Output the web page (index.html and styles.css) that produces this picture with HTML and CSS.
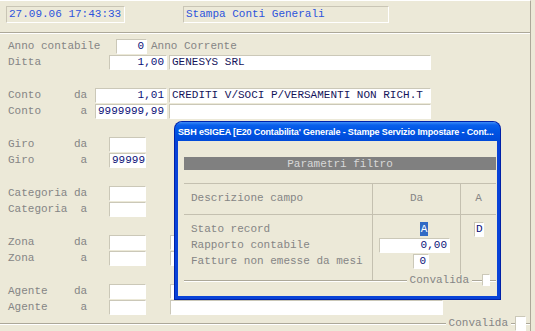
FILE: index.html
```html
<!DOCTYPE html>
<html lang="it">
<head>
  <meta charset="UTF-8" />
  <title>Stampa Conti Generali</title>
  <link rel="stylesheet" href="styles.css">
</head>
<body>
  <div class="screen">
    <header class="head">
      <div class="clock">27.09.06 17:43:33</div>
      <div class="title">Stampa Conti Generali</div>
    </header>

    <main class="form">
      <div class="row">
        <span class="lbl">Anno contabile</span>
        <span class="fld num w-anno">0</span>
        <span class="note">Anno Corrente</span>
      </div>
      <div class="row">
        <span class="lbl">Ditta</span>
        <span class="fld num w-ditta">1,00</span>
        <span class="fld w-name">GENESYS SRL</span>
      </div>
      <div class="gap"></div>
      <div class="row">
        <span class="lbl">Conto     da</span>
        <span class="fld num w-conto">1,01</span>
        <span class="fld w-name">CREDITI V/SOCI P/VERSAMENTI NON RICH.T</span>
      </div>
      <div class="row">
        <span class="lbl">Conto      a</span>
        <span class="fld num w-conto">9999999,99</span>
        <span class="fld w-name"></span>
      </div>
      <div class="gap"></div>
      <div class="row">
        <span class="lbl">Giro      da</span>
        <span class="fld w-short"></span>
      </div>
      <div class="row">
        <span class="lbl">Giro       a</span>
        <span class="fld w-short">99999</span>
      </div>
      <div class="gap"></div>
      <div class="row">
        <span class="lbl">Categoria da</span>
        <span class="fld w-short"></span>
      </div>
      <div class="row">
        <span class="lbl">Categoria  a</span>
        <span class="fld w-short"></span>
      </div>
      <div class="gap"></div>
      <div class="row">
        <span class="lbl">Zona      da</span>
        <span class="fld w-short"></span>
        <span class="fld w-desc"></span>
      </div>
      <div class="row">
        <span class="lbl">Zona       a</span>
        <span class="fld w-short"></span>
        <span class="fld w-desc"></span>
      </div>
      <div class="gap"></div>
      <div class="row">
        <span class="lbl">Agente    da</span>
        <span class="fld w-short"></span>
        <span class="fld w-desc"></span>
      </div>
      <div class="row">
        <span class="lbl">Agente     a</span>
        <span class="fld w-short"></span>
        <span class="fld w-desc"></span>
      </div>
    </main>

    <footer class="foot">
      <div class="rule"></div>
      <span class="ok-label">Convalida</span>
      <div class="rule short"></div>
      <span class="ok-box"></span>
      <div class="rule end"></div>
    </footer>
  </div>

  <!-- finestra parametri filtro -->
  <div class="dialog">
    <div class="dlg-bar">SBH eSIGEA [E20 Contabilita' Generale - Stampe Servizio Impostare - Cont...</div>
    <div class="dlg-body">
      <div class="band">Parametri filtro</div>
      <div class="table">
        <div class="trow thead">
          <div class="c1">Descrizione campo</div>
          <div class="c2 center">Da</div>
          <div class="c3 center">A</div>
        </div>
        <div class="trow tbody">
          <div class="c1">
            <div class="line">Stato record</div>
            <div class="line">Rapporto contabile</div>
            <div class="line">Fatture non emesse da mesi</div>
          </div>
          <div class="c2">
            <div class="line"><span class="sel">A</span></div>
            <div class="line"><span class="fld num w-rapp">0,00</span></div>
            <div class="line"><span class="fld num w-mesi">0</span></div>
          </div>
          <div class="c3">
            <div class="line"><span class="fld w-d">D</span></div>
            <div class="line"></div>
            <div class="line"></div>
          </div>
        </div>
        <div class="dlg-foot">
          <div class="rule"></div>
          <span class="ok-label">Convalida</span>
          <div class="rule tiny"></div>
          <span class="ok-box small"></span>
          <div class="rule tail"></div>
        </div>
      </div>
    </div>
  </div>
</body>
</html>
```

FILE: styles.css
```css
body {
  margin: 0;
  width: 535px;
  height: 331px;
  overflow: hidden;
  position: relative;
  background: #ece9d8;
  color: #858585;
  font-family: "Liberation Mono", "Courier New", monospace;
  font-size: 11px;
  line-height: 13px;
}
.screen {
  width: 531px;
  height: 331px;
  box-sizing: border-box;
  border-top: 1px solid #fff;
  border-right: 1px solid #aca899;
}
.head {
  height: 32px;
  box-sizing: border-box;
  padding: 5px 0 0 6px;
  display: flex;
  align-items: flex-start;
  border-bottom: 1px solid #aca899;
  box-shadow: 0 1px #fff;
}
.clock,
.title {
  height: 17px;
  box-sizing: border-box;
  padding: 1px 0 0 2px;
  color: #2d54dc;
  border: 1px solid;
  border-color: #c9c5b5 #fff #fff #c9c5b5;
}
.clock {
  width: 119px;
}
.title {
  width: 206px;
  margin-left: 58px;
}
.form {
  padding: 5px 0 0 8px;
}
.row {
  height: 16.33px;
  display: flex;
  align-items: center;
}
.gap {
  height: 16.33px;
}
.lbl {
  flex: none;
  width: 87px;
  white-space: pre;
}
.note {
  margin-left: 4px;
  white-space: pre;
}
.fld {
  flex: none;
  display: inline-block;
  height: 15px;
  box-sizing: border-box;
  padding: 0 2px;
  background: #fff;
  color: #0a1078;
  border: 1px solid;
  border-color: #cbc8b8 #fff #fff #cbc8b8;
  white-space: pre;
  overflow: hidden;
}
.num {
  text-align: right;
}
.w-anno {
  width: 31px;
  margin-left: 21px;
}
.w-ditta {
  width: 58px;
  margin-left: 14px;
}
.w-name {
  width: 262px;
  margin-left: 2px;
  color: #14145a;
}
.w-conto {
  width: 72px;
}
.w-short {
  width: 37px;
  margin-left: 14px;
}
.w-desc {
  width: 273px;
  margin-left: 24px;
}
.foot {
  height: 15px;
  display: flex;
  align-items: center;
}
.rule {
  flex: 1;
  height: 1px;
  background: #aca899;
  box-shadow: 0 1px #fff;
}
.rule.short {
  flex: none;
  width: 4px;
}
.rule.end {
  flex: none;
  width: 4px;
}
.ok-label {
  padding: 0 3px;
  background: #ece9d8;
}
.ok-box {
  width: 11px;
  height: 15px;
  box-sizing: border-box;
  background: #fff;
  border: 1px solid;
  border-color: #cbc8b8 #fff #fff #cbc8b8;
}

/* dialog */
.dialog {
  position: absolute;
  left: 175px;
  top: 122px;
  width: 325px;
  height: 177px;
  box-sizing: border-box;
  border: 3px solid #0842d7;
  border-top: 0;
  border-radius: 7px 7px 0 0;
  background: #ece9d8;
  box-shadow: 0 0 0 1px #0021a8;
}
.dlg-bar {
  height: 19px;
  margin: 0 -3px;
  padding-left: 3px;
  border-radius: 7px 7px 0 0;
  background: linear-gradient(#3c8cf8 0, #0a60ec 3px, #0055e5 45%, #0049d8 100%);
  color: #fff;
  font-family: "Liberation Sans", Arial, sans-serif;
  font-weight: bold;
  font-size: 9px;
  letter-spacing: -0.15px;
  line-height: 20px;
  white-space: nowrap;
  overflow: hidden;
}
.dlg-body {
  padding: 16px 1px 0 6px;
}
.band {
  height: 13px;
  background: #808080;
  color: #d8d8d8;
  text-align: center;
  line-height: 14px;
}
.table {
  margin-top: 13px;
  border-top: 1px solid #c4c0b0;
}
.trow {
  display: flex;
}
.c1 {
  width: 188px;
  box-sizing: border-box;
  padding-left: 7px;
}
.c2 {
  width: 88px;
  box-sizing: border-box;
  border-left: 1px solid #c4c0b0;
}
.c3 {
  width: 36px;
  box-sizing: border-box;
  border-left: 1px solid #c4c0b0;
}
.center {
  text-align: center;
}
.thead {
  height: 31px;
  box-sizing: border-box;
  border-bottom: 1px solid #c4c0b0;
  line-height: 29px;
}
.tbody {
  height: 65px;
  box-sizing: border-box;
  padding-top: 6px;
}
.tbody .c2,
.tbody .c3 {
  margin-top: -6px;
  padding-top: 6px;
}
.line {
  height: 16px;
  display: flex;
  align-items: center;
}
.sel {
  margin-left: 47px;
  width: 8px;
  height: 14px;
  line-height: 14px;
  background: #316ac5;
  color: #fff;
  text-align: center;
}
.w-rapp {
  width: 71px;
  margin-left: 6px;
}
.w-mesi {
  width: 16px;
  margin-left: 40px;
}
.w-d {
  width: 10px;
  margin-left: 13px;
  padding: 0 1px;
}
.dlg-foot {
  position: relative;
  height: 12px;
  margin-top: -6px;
  display: flex;
  align-items: center;
}
.rule.tiny {
  flex: none;
  width: 10px;
}
.rule.tail {
  flex: none;
  width: 6px;
}
.ok-box.small {
  width: 8px;
  height: 12px;
}
```
